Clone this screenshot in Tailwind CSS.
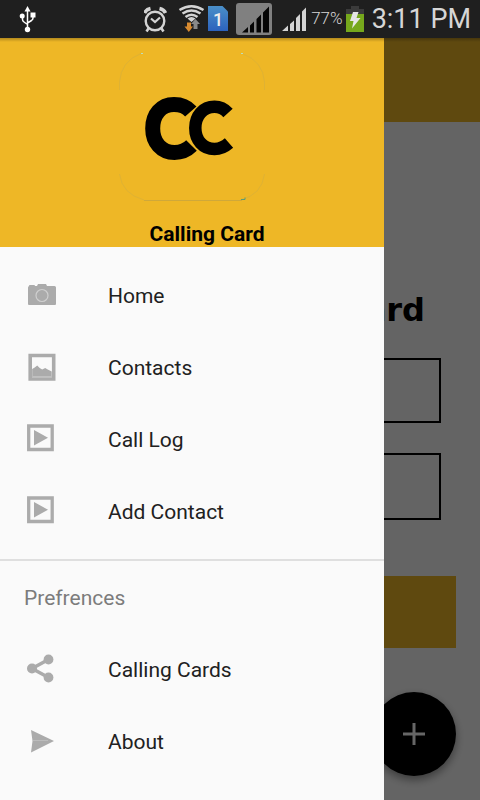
<!DOCTYPE html>
<html lang="en">
<head>
<meta charset="utf-8">
<meta name="viewport" content="width=device-width, initial-scale=1">
<title>Calling Card</title>
<script src="https://cdn.jsdelivr.net/npm/@tailwindcss/browser@4"></script>
</head>
<body class="flex min-h-screen flex-col bg-[#fafafa] font-['Roboto',sans-serif]">
  <!-- Status bar -->
  <header class="flex h-[38px] items-center justify-between bg-[#1f1f1f] pr-[9px] pl-[19px] text-[#d6d6d6]">
    <svg class="h-[28px] w-[17px]" viewBox="0 0 17 28" fill="none" stroke="#fff" stroke-width="1.500" role="img" aria-label="USB connected">
      <path d="M8.500 5V24M3.500 11v3.500q0 1.500 1.500 2.500l3.500 2.500M14 10v3q0 1.500-1.500 2.500l-4 2.500"/>
      <path d="M8.500 1l3 5.500h-6z" fill="#fff" stroke="none"/>
      <circle cx="3.200" cy="11" r="2.500" fill="#fff" stroke="none"/>
      <path d="M11.500 7.500h5v5h-5z" fill="#fff" stroke="none"/>
      <circle cx="8.500" cy="24.500" r="2.700" fill="#fff" stroke="none"/>
    </svg>
    <div class="flex items-center">
      <svg class="h-[38px] w-[162px]" viewBox="0 0 162 38" fill="none" role="img" aria-label="Alarm, Wi-Fi, SIM 1, mobile signal">
        <g stroke="#d4d4d4">
          <circle cx="11" cy="21" r="9.300" stroke-width="2.400"/>
          <path d="M7 18.500l4 3.500 5-4.500" stroke-width="2.200"/>
          <path d="M4.500 28.500L2.500 31.500M17.500 28.500l2 3" stroke-width="2.600"/>
          <path d="M.500 13Q2 9.500 6.500 8.500M21.500 13Q20 9.500 15.500 8.500" stroke-width="3.500"/>
        </g>
        <g stroke="#d4d4d4" stroke-width="2.500">
          <path d="M35.500 10Q47.500 2.500 59.500 10M38.500 13.500Q47.500 7.500 56.500 13.500M41.500 17Q47.500 12.500 53.500 17"/>
          <path d="M43.500 18.500Q47.500 15.500 51.500 18.500L47.500 22z" fill="#d4d4d4" stroke="none"/>
        </g>
        <path d="M43 22.500h4v4h2L44.800 32l-4.300-5.500H43z" fill="#d98b30"/>
        <path d="M49.500 29v-5h-2.500L51.500 19l4.500 5h-2.500v5z" fill="#8a8a8a"/>
        <defs>
          <linearGradient id="sim" x1="0" y1="0" x2="0" y2="1"><stop stop-color="#4a8fc8"/><stop offset="1" stop-color="#2c62bd"/></linearGradient>
        </defs>
        <path d="M64 6h14.500L84 11.500V31H64z" fill="url(#sim)"/>
        <text x="74" y="25.500" text-anchor="middle" font-family="Roboto" font-size="18" font-weight="500" fill="#eee">1</text>
        <rect x="92" y="3" width="36" height="32" rx="3" fill="#808080"/>
        <path d="M98 32.500l6-5.500v5.500zM106 25.500l4-4v11h-4zM112.500 19l4.500-4.500v18h-4.500zM119 12.500l6-6v26h-6z" fill="#050505"/>
        <path d="M138 31l6-5.500V31zM146 24l4-3.500V31h-4zM152 18l4-4v17h-4zM158 11.500l4-4V31h-4z" fill="#d4d4d4"/>
      </svg>
      <span class="ml-[5px] text-[17px] font-light">77%</span>
      <svg class="ml-[3px] h-[38px] w-[18px]" viewBox="0 0 18 38" role="img" aria-label="Charging">
        <path d="M5 6h8v3h5v5H0V9h5z" fill="#3b3b3b"/>
        <path d="M0 14h18v18H0z" fill="#76a81c"/>
        <path d="M7 12h5.500l-2 6h4L6 28.500 7.500 21H4z" fill="#e6e6e6"/>
      </svg>
      <time class="ml-[8px] text-[27px]">3:11 PM</time>
    </div>
  </header>

  <div class="relative flex flex-1 flex-col">
    <!-- Page under the drawer -->
    <main class="flex flex-1 flex-col">
      <div class="h-[84px] bg-[#eeb726]"></div>
      <form class="flex flex-col px-[39px] pt-[164px]">
        <h1 class="mb-6 pr-[16px] text-right font-['DejaVu_Sans',sans-serif] text-[32px] leading-[48px] font-bold text-black">Calling Card</h1>
        <input type="tel" aria-label="Card number" class="mb-[30px] h-[65px] border-2 border-black px-3 text-[21px]">
        <input type="tel" aria-label="PIN" class="h-[67px] border-2 border-black px-3 text-[21px]">
        <button type="submit" aria-label="Save" class="-mx-[15px] mt-14 h-[72px] bg-[#eeb726]"></button>
      </form>
      <button type="button" aria-label="Add" class="absolute right-6 bottom-6 flex size-[84px] items-center justify-center rounded-full bg-black shadow-[0_4px_8px_rgba(0,0,0,0.4)]">
        <svg class="size-[22px]" viewBox="0 0 22 22" stroke="#fff" stroke-width="3" aria-hidden="true"><path d="M11 0v22M0 11h22"/></svg>
      </button>
    </main>

    <div class="absolute inset-0 bg-black/60"></div>

    <!-- Navigation drawer -->
    <aside class="absolute inset-y-0 left-0 flex w-4/5 flex-col bg-[#fafafa]">
      <div class="flex flex-col items-center bg-[#eeb726] pt-[13px]">
        <svg class="size-[150px]" viewBox="117 51 150 150" fill="none" role="img" aria-label="Calling Card logo">
          <path d="M119.500 90V82Q121 61 141 53.500M242 53.500Q263 61 264.500 82V90M119.500 174Q122 194 144 200M240 200Q262 195 264.500 174" stroke="#dfb234" stroke-width="1"/>
          <path d="M144 200.500H242" stroke="#cfa83a"/>
          <path d="M141 53.500h2M241 53.500h2" stroke="#b9dfc0"/>
          <path d="M241 199.500h4v-2" stroke="#5c9c74"/>
          <path d="M190.800 111.500C186.500 106.500 181 104.500 174 104.500C161 104.500 152.700 114.500 152.700 128.500C152.700 142.500 161.500 152.500 174.500 152.500C181.500 152.500 187 150 191.500 145.500" stroke="#000" stroke-width="15"/>
          <path d="M228 113C224 108.500 220 106.800 214.500 106.800C203 106.800 195.300 116 195.300 128C195.300 140 203 149 214.500 149C220.500 149 224.500 147 229 143" stroke="#eeb726" stroke-width="14"/>
          <path d="M228 113C224 108.500 220 106.800 214.500 106.800C203 106.800 195.300 116 195.300 128C195.300 140 203 149 214.500 149C220.500 149 224.500 147 229 143" stroke="#000" stroke-width="12.500"/>
        </svg>
        <p class="mt-[20px] pl-[30px] text-[21px] leading-[26px] font-bold text-black">Calling Card</p>
      </div>

      <nav class="flex flex-col pt-[13px] text-[21px] text-[#212121]">
        <a href="#home" class="flex h-[72px] items-center gap-12 px-6">
          <svg class="size-9" viewBox="0 0 36 36" aria-hidden="true"><path d="M4.500 8.500L5.500 7h5l.500 1h2l1-2h8l1 2h7.500q1.500 0 1.500 1.500v16.500q0 1-1 1h-26q-1 0-1-1V9.500z" fill="#ababab"/><circle cx="18" cy="17.500" r="6" fill="none" stroke="#cfcfcf" stroke-width="1.200"/></svg>
          <span class="pt-0.5">Home</span>
        </a>
        <a href="#contacts" class="flex h-[72px] items-center gap-12 px-6">
          <svg class="size-9" viewBox="0 0 36 36" aria-hidden="true"><path d="M6.200 5.500h23.500v23.500H6.200z" fill="#fafafa" stroke="#ababab" stroke-width="3.600"/><path d="M8.200 19l2.500-1.500 2.500-2 2.500 2.500 2.500 1.500 3-1.500 2.500 1.500 4 2v5.500H8.200z" fill="#ababab"/><path d="M8.500 26.500h19" stroke="#c0c0c0"/></svg>
          <span class="pt-0.5">Contacts</span>
        </a>
        <a href="#call-log" class="flex h-[72px] items-center gap-12 px-6">
          <svg class="size-9" viewBox="0 0 36 36" aria-hidden="true"><path d="M4.700 4h23.500v23.500H4.700z" fill="none" stroke="#ababab" stroke-width="3.300"/><path d="M10 8v15.500l14-7.800z" fill="#ababab"/></svg>
          <span class="pt-0.5">Call Log</span>
        </a>
        <a href="#add-contact" class="flex h-[72px] items-center gap-12 px-6">
          <svg class="size-9" viewBox="0 0 36 36" aria-hidden="true"><path d="M4.700 4h23.500v23.500H4.700z" fill="none" stroke="#ababab" stroke-width="3.300"/><path d="M10 8v15.500l14-7.800z" fill="#ababab"/></svg>
          <span class="pt-0.5">Add Contact</span>
        </a>
        <hr class="mt-[11px] border-t-2 border-[#dfdfdf]">
        <h2 class="flex h-[73px] items-center px-6 pt-0.5 text-[#7c7c7c]">Prefrences</h2>
        <a href="#calling-cards" class="flex h-[72px] items-center gap-12 px-6">
          <svg class="size-9" viewBox="0 0 36 36" fill="#ababab" aria-hidden="true"><path d="M24.500 7.500L8 16.500l16.500 9" fill="none" stroke="#ababab" stroke-width="3.500"/><circle cx="8" cy="16.500" r="5"/><circle cx="24.500" cy="7.500" r="4.900"/><circle cx="24.500" cy="25.500" r="4.900"/></svg>
          <span class="pt-0.5">Calling Cards</span>
        </a>
        <a href="#about" class="flex h-[72px] items-center gap-12 px-6">
          <svg class="size-9" viewBox="0 0 36 36" aria-hidden="true"><path d="M7 6L30 17 7 28.500l1.500-11.500z" fill="#ababab"/><path d="M9 16.500h15" stroke="#bcbcbc"/></svg>
          <span class="pt-0.5">About</span>
        </a>
      </nav>
    </aside>

    <div class="pointer-events-none absolute inset-x-0 top-0 h-1 bg-linear-to-b from-black/25 to-transparent"></div>
  </div>
</body>
</html>
